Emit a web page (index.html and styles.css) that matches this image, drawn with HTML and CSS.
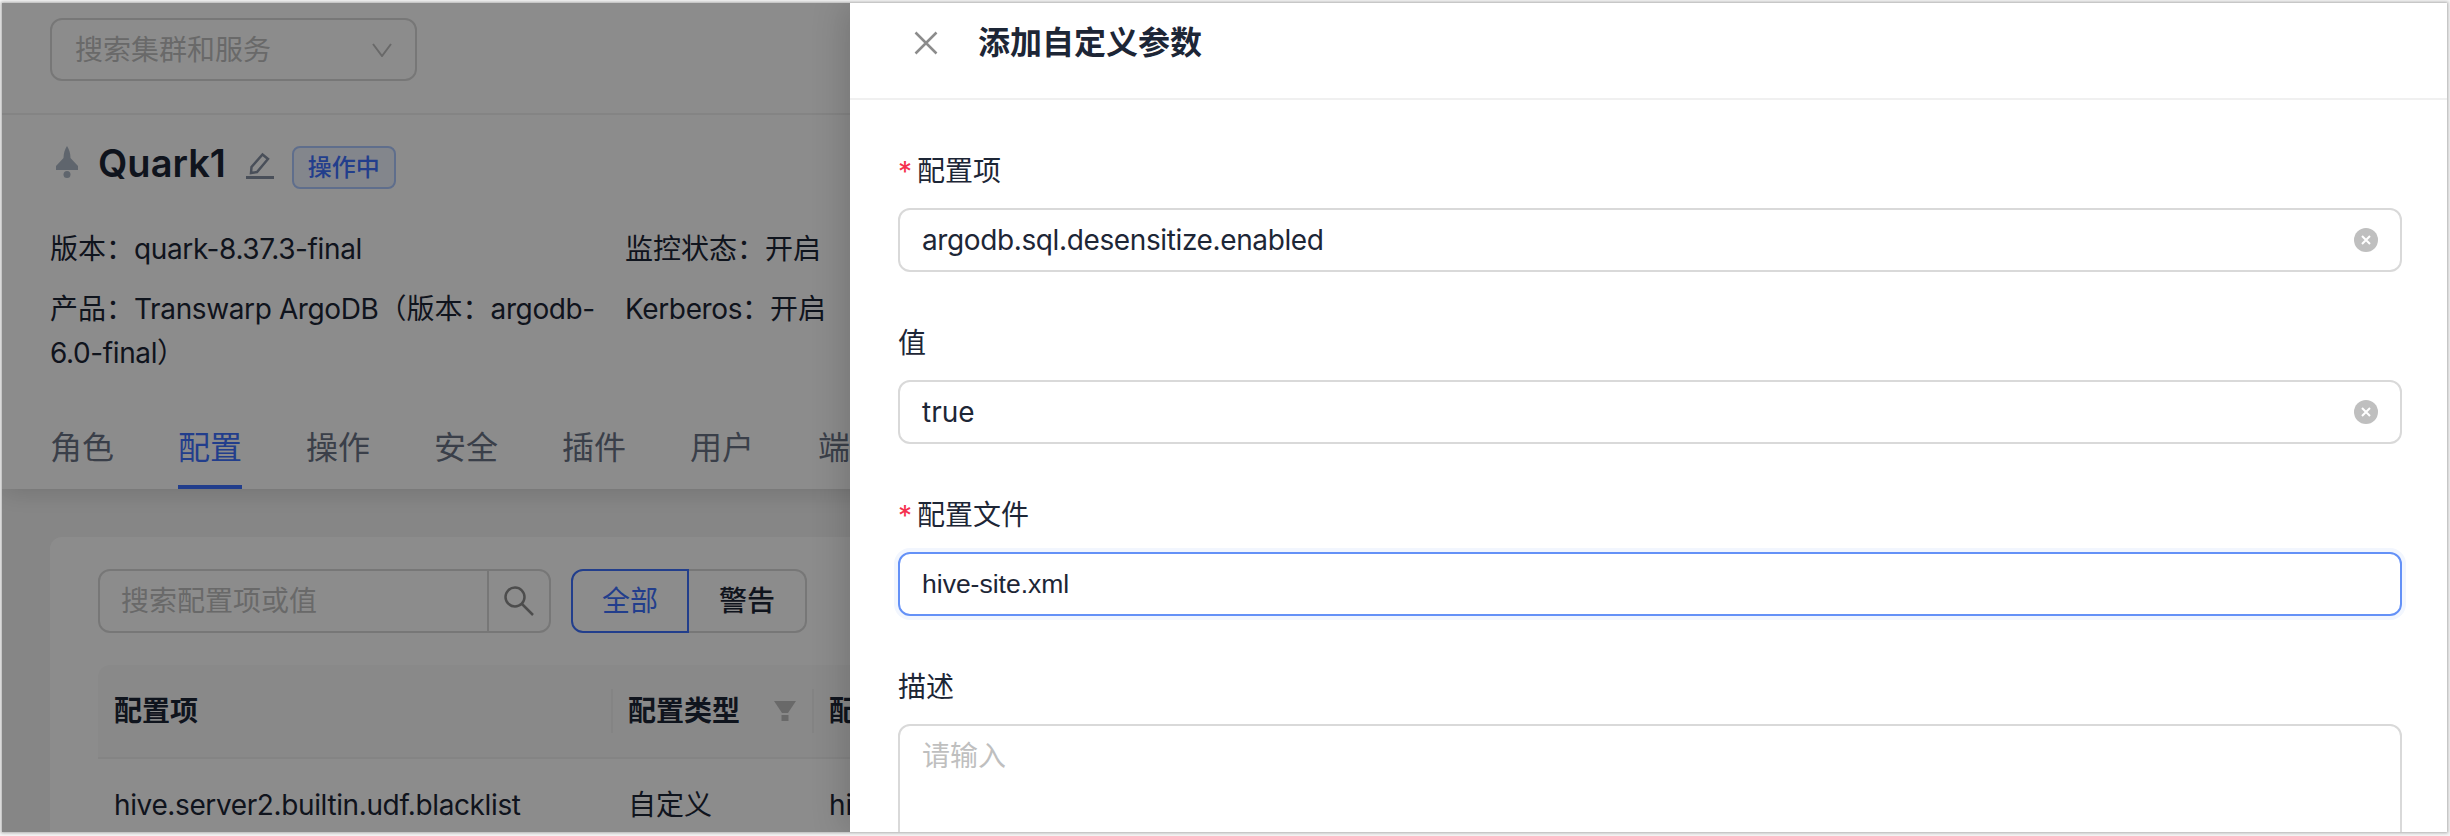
FILE: index.html
```html
<!DOCTYPE html>
<html lang="zh-CN">
<head>
<meta charset="utf-8">
<title>添加自定义参数</title>
<link rel="stylesheet" href="styles.css">
</head>
<body>
<div class="window">
  <div class="page">
    <header class="head">
      <div class="topbar">
        <div class="select">
          <span class="placeholder">搜索集群和服务</span>
          <svg class="chevron" viewBox="0 0 20 14"><path d="M1 1l9 12 9-12"/></svg>
        </div>
      </div>
      <div class="summary">
        <div class="title-row">
          <svg class="rocket" viewBox="0 0 22 32"><path d="M11 0c2 3 3.500 7 3.500 12l7.500 8v4H0v-4l7.500-8C7.500 7 9 3 11 0z"/><circle cx="11" cy="28.500" r="3.500"/></svg>
          <h1 class="name">Quark1</h1>
          <svg class="edit" viewBox="0 0 28 27"><path class="edit-pen" d="M5 21l.5-6L16.500 2.500l5.500 4.500L11 20z"/><rect class="edit-line" y="24" width="28" height="3"/></svg>
          <span class="tag">操作中</span>
        </div>
        <div class="info">
          <div>版本：<span class="latin">quark-8.37.3-final</span></div>
          <div>监控状态：开启</div>
          <div>产品：<span class="latin">Transwarp ArgoDB</span>（版本：<span class="latin">argodb-</span><br><span class="latin">6.0-final</span>）</div>
          <div><span class="latin">Kerberos</span>：开启</div>
        </div>
        <nav class="tabs">
          <span class="tab">角色</span>
          <span class="tab active">配置</span>
          <span class="tab">操作</span>
          <span class="tab">安全</span>
          <span class="tab">插件</span>
          <span class="tab">用户</span>
          <span class="tab">端点</span>
        </nav>
      </div>
    </header>
    <main class="section">
      <div class="card">
        <div class="toolbar">
          <div class="search">
            <span class="search-input">搜索配置项或值</span>
            <span class="search-btn"><svg class="search-icon" viewBox="0 0 30 30"><circle cx="11" cy="11" r="9.500"/><path d="M18 18l11 11"/></svg></span>
          </div>
          <div class="radios">
            <span class="radio on">全部</span>
            <span class="radio">警告</span>
          </div>
        </div>
        <div class="table">
          <div class="th">配置项</div>
          <div class="th sep">配置类型<svg class="funnel" viewBox="0 0 22 20"><path d="M0 0h22l-8 12H8z"/><rect x="7.500" y="14" width="7" height="6"/></svg></div>
          <div class="th sep">配置文件</div>
          <div class="td"><span class="latin">hive.server2.builtin.udf.blacklist</span></div>
          <div class="td">自定义</div>
          <div class="td">hive-site.xml</div>
        </div>
      </div>
    </main>
  </div>
  <div class="mask"></div>
  <aside class="drawer">
    <div class="drawer-head">
      <svg class="close" viewBox="0 0 24 24"><path d="M1.500 1.500l21 21M22.500 1.500l-21 21"/></svg>
      <h2 class="drawer-title">添加自定义参数</h2>
    </div>
    <form class="form">
      <div class="field">
        <div class="label"><span class="req">*</span>配置项</div>
        <div class="control"><span class="latin">argodb.sql.desensitize.enabled</span>
          <svg class="clear" viewBox="0 0 24 24"><circle cx="12" cy="12" r="12"/><path d="M8 8l8 8M16 8l-8 8"/></svg>
        </div>
      </div>
      <div class="field">
        <div class="label">值</div>
        <div class="control"><span>true</span>
          <svg class="clear" viewBox="0 0 24 24"><circle cx="12" cy="12" r="12"/><path d="M8 8l8 8M16 8l-8 8"/></svg>
        </div>
      </div>
      <div class="field">
        <div class="label"><span class="req">*</span>配置文件</div>
        <div class="control focus"><span class="file-name">hive-site.xml</span></div>
      </div>
      <div class="field">
        <div class="label">描述</div>
        <div class="textarea">请输入</div>
      </div>
    </form>
  </aside>
</div>
</body>
</html>
```
FILE: styles.css
```css
* { box-sizing: border-box; }
html, body { margin: 0; height: 100%; }
body {
  background: #f6f6f6;
  padding: 3px 3px 4px 2px;
  overflow: hidden;
  font-family: "Inter", "Noto Sans CJK SC", sans-serif;
  font-size: 28px;
  line-height: 44px;
  color: #1d2636;
}
.latin { letter-spacing: -.38px; }
.window {
  position: relative;
  height: 829px;
  overflow: hidden;
  background: #fff;
  box-shadow: 0 0 3px 1px rgba(0, 0, 0, .3);
}
.page { width: 100%; height: 100%; overflow: hidden; background: #f5f5f5; }
.head {
  position: relative;
  background: #fff;
  box-shadow: 0 4px 24px rgba(0, 0, 0, .14);
}
.topbar {
  height: 112px;
  padding: 15px 48px 0;
  border-bottom: 2px solid #f0f0f0;
}
.select {
  width: 367px;
  height: 63px;
  padding: 0 23px 0 23px;
  display: flex;
  align-items: center;
  justify-content: space-between;
  border: 2px solid #d9d9d9;
  border-radius: 12px;
}
.placeholder { color: #bfbfbf; }
.chevron { width: 20px; height: 14px; fill: none; stroke: #bfbfbf; stroke-width: 2; }
.summary { padding: 31px 48px 0; }
.title-row { display: flex; align-items: center; height: 43px; }
.rocket { width: 22px; height: 32px; margin: 0 0 12px 6px; fill: #adb8c6; }
.name { margin: 0 0 8px 20px; font-size: 38px; line-height: 43px; font-weight: 600; color: #1d2636; }
.edit { width: 28px; height: 27px; margin: 0 0 4px 20px; }
.edit-pen { fill: none; stroke: #8690a3; stroke-width: 2.500; }
.edit-line { fill: #8690a3; }
.tag {
  margin-left: 18px;
  width: 104px;
  height: 43px;
  display: flex;
  align-items: center;
  justify-content: center;
  font-size: 24px;
  font-weight: 500;
  line-height: 1;
  color: #3f72ff;
  background: #eff5ff;
  border: 2px solid #adc8ff;
  border-radius: 8px;
}
.info {
  margin-top: 38px;
  display: grid;
  grid-template-columns: 575px 1fr;
  row-gap: 16px;
  width: 900px;
}
.tabs { margin-top: 49px; display: flex; gap: 64px; }
.tab {
  font-size: 32px;
  line-height: 48px;
  padding-bottom: 17px;
  color: #6a7386;
  border-bottom: 0 solid transparent;
}
.tab.active { color: #3f72ff; padding-bottom: 13px; border-bottom-width: 4px; border-color: #3f72ff; }
.section { padding: 48px 48px 0; }
.card { background: #fff; border-radius: 12px; padding: 32px 48px; height: 400px; }
.toolbar { display: flex; gap: 20px; height: 64px; }
.search {
  width: 453px;
  display: flex;
  border: 2px solid #d9d9d9;
  border-radius: 12px;
}
.search-input { flex: 1; padding-left: 21px; line-height: 60px; color: #bfbfbf; }
.search-btn {
  width: 62px;
  display: flex;
  align-items: center;
  justify-content: center;
  border-left: 2px solid #d9d9d9;
}
.search-icon { width: 30px; height: 30px; fill: none; stroke: #8c8c8c; stroke-width: 2.500; }
.radios { display: flex; }
.radio {
  width: 118px;
  text-align: center;
  line-height: 60px;
  font-weight: 500;
  border: 2px solid #d9d9d9;
  border-left: 0;
  border-radius: 0 12px 12px 0;
}
.radio.on {
  color: #3f72ff;
  font-weight: 400;
  border: 2px solid #3f72ff;
  border-radius: 12px 0 0 12px;
}
.table { margin-top: 32px; display: grid; grid-template-columns: 513px 201px 1fr; }
.th {
  position: relative;
  height: 94px;
  padding-left: 16px;
  display: flex;
  align-items: center;
  font-weight: 600;
  background: #fafafa;
  border-bottom: 2px solid #f0f0f0;
}
.th:first-child { border-top-left-radius: 12px; }
.th.sep { padding-left: 17px; }
.th.sep::before {
  content: "";
  position: absolute;
  left: 0;
  top: 24px;
  width: 2px;
  height: 44px;
  background: #f0f0f0;
}
.funnel { width: 22px; height: 20px; margin-left: 34px; fill: #bfbfbf; }
.td { padding: 24px 16px; height: 92px; }
.td + .td { padding-left: 17px; }
.mask { position: absolute; inset: 0; background: rgba(0, 0, 0, .45); }
.drawer {
  position: absolute;
  top: 0;
  right: 0;
  bottom: 0;
  width: 1597px;
  background: #fff;
  box-shadow: -6px 0 32px rgba(0, 0, 0, .16);
}
.drawer-head {
  height: 97px;
  padding: 0 0 16px 64px;
  display: flex;
  align-items: center;
  gap: 40px;
  border-bottom: 2px solid #f0f0f0;
}
.close { width: 24px; height: 24px; fill: none; stroke: #8c8c8c; stroke-width: 2.500; }
.drawer-title { margin: 0; font-size: 32px; line-height: 44px; font-weight: 600; color: #1d2636; }
.form { padding: 48px 45px 0 48px; }
.field + .field { margin-top: 48px; }
.label { height: 44px; margin-bottom: 16px; padding-top: 1px; display: flex; align-items: center; }
.req { width: 19px; color: #f5304f; font-size: 28px; line-height: 1; padding-top: 2px; }
.control {
  height: 64px;
  padding: 0 22px 0 22px;
  display: flex;
  align-items: center;
  justify-content: space-between;
  border: 2px solid #d9d9d9;
  border-radius: 12px;
}
.control.focus { border-color: #6491f7; box-shadow: 0 0 0 4px #f2f6fe; }
.file-name { font-family: "Liberation Sans", sans-serif; font-size: 26.500px; }
.clear { width: 24px; height: 24px; flex: none; }
.clear circle { fill: #bfbfbf; }
.clear path { fill: none; stroke: #fff; stroke-width: 2; }
.textarea {
  height: 200px;
  padding: 8px 22px;
  color: #bfbfbf;
  border: 2px solid #d9d9d9;
  border-radius: 12px;
}
```
